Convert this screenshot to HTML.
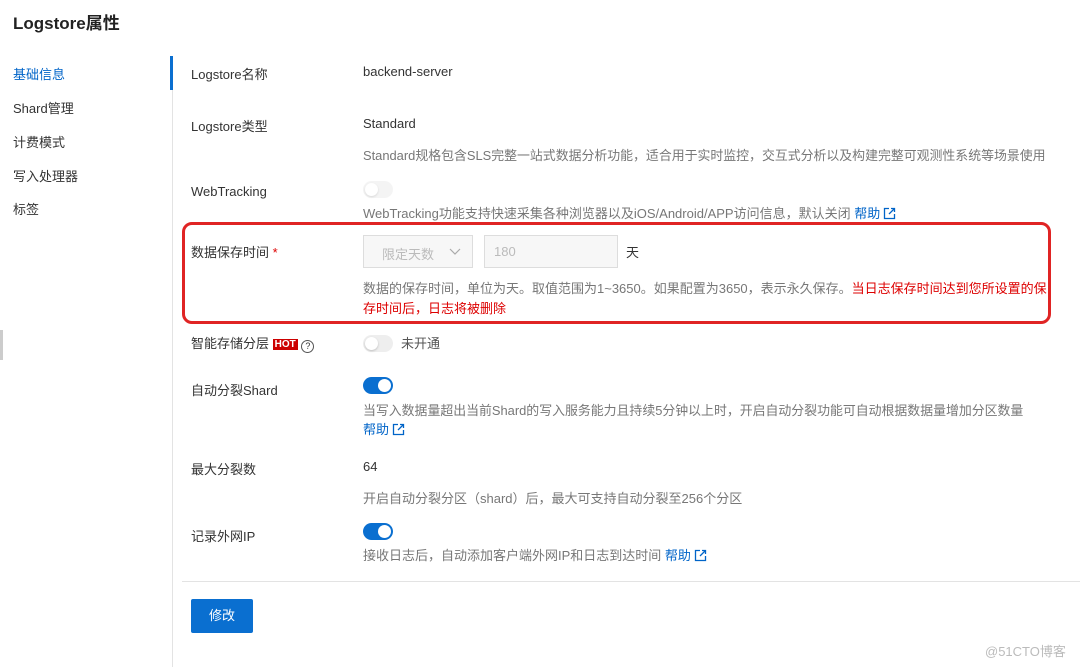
<!DOCTYPE html>
<html><head><meta charset="utf-8"><style>
*{margin:0;padding:0;box-sizing:border-box}
body{width:1080px;height:667px;background:#fff;position:relative;overflow:hidden;font-family:"Liberation Sans","Noto Sans CJK SC",sans-serif;font-size:13px;color:#333}
.a{position:absolute;white-space:nowrap}
.g{color:#777}
.b{color:#0064c8}
.tg{position:absolute;width:30px;height:17px;border-radius:9px}
.tg i{position:absolute;top:2px;width:13px;height:13px;border-radius:50%;background:#fff}
.off{background:#eee}.off i{left:2px;box-shadow:0 1px 2px rgba(0,0,0,.2)}
.on{background:#0a6fd0}.on i{right:2px}
.ext{display:inline-block;width:13px;height:13px;vertical-align:-2px;margin-left:3px}
</style></head><body>
<div class="a" style="left:13px;top:9px;font-size:17px;font-weight:600;color:#222">Logstore属性</div>
<div class="a b" style="left:13px;top:64px">基础信息</div>
<div class="a" style="left:13px;top:98px">Shard管理</div>
<div class="a" style="left:13px;top:132px">计费模式</div>
<div class="a" style="left:13px;top:166px">写入处理器</div>
<div class="a" style="left:13px;top:199px">标签</div>
<div class="a" style="left:0;top:330px;width:3px;height:30px;background:#ccc"></div>
<div class="a" style="left:172px;top:56px;width:1px;height:611px;background:#e3e3e3"></div>
<div class="a" style="left:170px;top:56px;width:3px;height:34px;background:#0a6fd0"></div>

<div class="a" style="left:191px;top:64px">Logstore名称</div>
<div class="a" style="left:363px;top:64px">backend-server</div>
<div class="a" style="left:191px;top:116px">Logstore类型</div>
<div class="a" style="left:363px;top:116px">Standard</div>
<div class="a g" style="left:363px;top:145px;font-size:12.9px">Standard规格包含SLS完整一站式数据分析功能，适合用于实时监控，交互式分析以及构建完整可观测性系统等场景使用</div>
<div class="a" style="left:191px;top:184px">WebTracking</div>
<div class="tg off" style="left:363px;top:181px;opacity:.6"><i></i></div>
<div class="a g" style="left:363px;top:203px">WebTracking功能支持快速采集各种浏览器以及iOS/Android/APP访问信息，默认关闭 <span class="b">帮助</span><svg class="ext" viewBox="0 0 13 13" fill="none" stroke="#0064c8" stroke-width="1.3"><path d="M6 1.5H1.5v10h10V7M8 1.5h3.5V5M11.5 1.5 6 7"/></svg></div>

<div class="a" style="left:182px;top:222px;width:869px;height:102px;border:3px solid #e02424;border-radius:10px"></div>
<div class="a" style="left:191px;top:242px">数据保存时间 <span style="color:#d00">*</span></div>
<div class="a" style="left:363px;top:235px;width:110px;height:33px;border:1px solid #ddd;background:#f7f7f7;color:#bbb;padding:8px 0 0 18px">限定天数<svg style="position:absolute;left:85px;top:12px" width="12" height="8" viewBox="0 0 12 8" fill="none" stroke="#aaa" stroke-width="1.2"><path d="M1 1l5 5 5-5"/></svg></div>
<div class="a" style="left:484px;top:235px;width:134px;height:33px;border:1px solid #ddd;background:#f7f7f7;color:#bbb;padding:8px 0 0 9px">180</div>
<div class="a" style="left:626px;top:242px">天</div>
<div class="a g" style="left:363px;top:278px">数据的保存时间，单位为天。取值范围为1~3650。如果配置为3650，表示永久保存。<span style="color:#d00">当日志保存时间达到您所设置的保</span></div>
<div class="a" style="left:363px;top:298px;color:#d00">存时间后，日志将被删除</div>

<div class="a" style="left:191px;top:333px">智能存储分层 <span style="background:#c00;color:#fff;font-size:10px;padding:0 2px;font-weight:bold;vertical-align:1px">HOT</span> <span style="display:inline-block;width:13px;height:13px;border:1px solid #555;border-radius:50%;font-size:9px;text-align:center;line-height:11px;vertical-align:-1px">?</span></div>
<div class="tg off" style="left:363px;top:335px"><i></i></div>
<div class="a" style="left:401px;top:333px;color:#555">未开通</div>
<div class="a" style="left:191px;top:380px">自动分裂Shard</div>
<div class="tg on" style="left:363px;top:377px"><i></i></div>
<div class="a g" style="left:363px;top:400px;font-size:12.9px">当写入数据量超出当前Shard的写入服务能力且持续5分钟以上时，开启自动分裂功能可自动根据数据量增加分区数量</div>
<div class="a b" style="left:363px;top:419px">帮助<svg class="ext" viewBox="0 0 13 13" fill="none" stroke="#0064c8" stroke-width="1.3"><path d="M6 1.5H1.5v10h10V7M8 1.5h3.5V5M11.5 1.5 6 7"/></svg></div>
<div class="a" style="left:191px;top:459px">最大分裂数</div>
<div class="a" style="left:363px;top:459px">64</div>
<div class="a g" style="left:363px;top:488px">开启自动分裂分区（shard）后，最大可支持自动分裂至256个分区</div>
<div class="a" style="left:191px;top:526px">记录外网IP</div>
<div class="tg on" style="left:363px;top:523px"><i></i></div>
<div class="a g" style="left:363px;top:545px">接收日志后，自动添加客户端外网IP和日志到达时间 <span class="b">帮助</span><svg class="ext" viewBox="0 0 13 13" fill="none" stroke="#0064c8" stroke-width="1.3"><path d="M6 1.5H1.5v10h10V7M8 1.5h3.5V5M11.5 1.5 6 7"/></svg></div>
<div class="a" style="left:182px;top:581px;width:898px;height:1px;background:#e3e3e3"></div>
<div class="a" style="left:191px;top:599px;width:62px;height:34px;background:#0a6fd0;border-radius:2px;color:#fff;text-align:center;line-height:34px">修改</div>
<div class="a" style="left:985px;top:641px;color:#bbb;font-size:13px">@51CTO博客</div>
</body></html>
